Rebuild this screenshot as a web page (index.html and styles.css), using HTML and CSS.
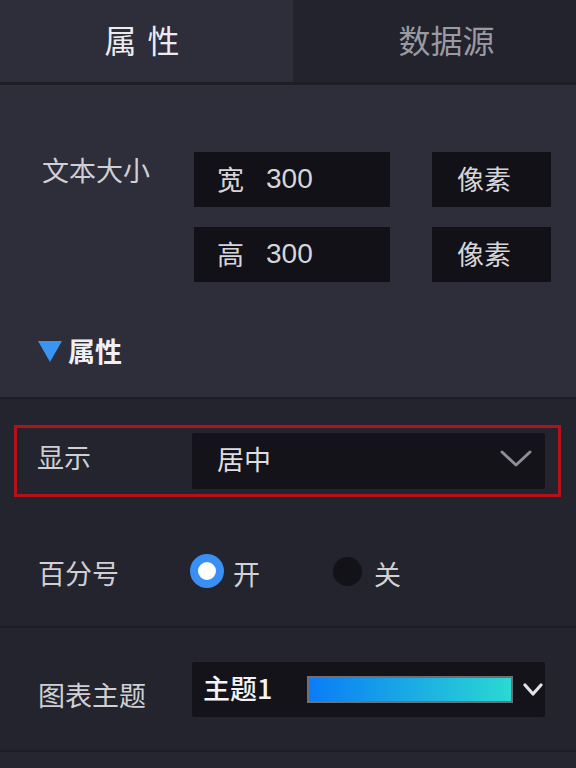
FILE: index.html
```html
<!DOCTYPE html>
<html lang="zh-CN">
<head>
<meta charset="utf-8">
<link rel="stylesheet" href="styles.css">
</head>
<body>
<div class="tabs">
  <div class="tab tab-active">属性</div>
  <div class="tab tab-inactive">数据源</div>
</div>

<section class="sec sec-top">
  <div class="size-row">
    <div class="label size-label">文本大小</div>
    <div class="size-grid">
      <div class="box box-input"><span class="dim">宽</span><span class="num">300</span></div>
      <div class="box box-unit">像素</div>
      <div class="box box-input"><span class="dim">高</span><span class="num">300</span></div>
      <div class="box box-unit">像素</div>
    </div>
  </div>
  <div class="sub-head">
    <svg class="tri" width="24" height="21" viewBox="0 0 24 21"><polygon points="0,0 24,0 12,21" fill="#3a95f2"/></svg>
    <span>属性</span>
  </div>
</section>

<section class="sec sec-mid">
  <div class="row row-highlight">
    <div class="label">显示</div>
    <div class="select">
      <span class="select-val">居中</span>
      <svg class="chev" width="32" height="18" viewBox="0 0 32 18"><polyline points="2,2 16,15 30,2" fill="none" stroke="#8e8e96" stroke-width="3" stroke-linecap="round" stroke-linejoin="round"/></svg>
    </div>
  </div>
  <div class="row row-radio">
    <div class="label">百分号</div>
    <div class="radios">
      <span class="radio radio-on"></span><span class="radio-text">开</span>
      <span class="radio radio-off"></span><span class="radio-text">关</span>
    </div>
  </div>
</section>

<section class="sec sec-theme">
  <div class="row row-theme">
    <div class="label">图表主题</div>
    <div class="select select-theme">
      <span class="theme-name">主题1</span>
      <span class="grad"></span>
      <svg class="chev-small" width="20" height="14" viewBox="0 0 20 14"><polyline points="2,2 10,11 18,2" fill="none" stroke="#e2e2e6" stroke-width="3.2" stroke-linecap="round" stroke-linejoin="round"/></svg>
    </div>
  </div>
</section>

<div class="bottom"></div>
</body>
</html>
```

FILE: styles.css
```css
* { box-sizing: border-box; }

html, body {
  margin: 0;
  padding: 0;
}

body {
  width: 576px;
  height: 768px;
  overflow: hidden;
  background: #262630;
  font-family: "Microsoft YaHei", "Noto Sans CJK SC", "Noto Sans", sans-serif;
  color: #cfcfd4;
}

/* Tabs */
.tabs {
  display: flex;
  height: 85px;
  border-bottom: 3px solid #1e1e27;
}

.tab {
  display: flex;
  align-items: center;
  justify-content: center;
  font-size: 32px;
  line-height: 1;
  padding-bottom: 4px;
}

.tab-active {
  width: 293px;
  background: #2e2e3a;
  color: #ececf0;
  letter-spacing: 11px;
  padding-left: 2px;
}

.tab-inactive {
  flex: 1;
  background: #23232d;
  color: #9a9aa2;
  padding-left: 24px;
}

/* Sections */
.sec {
  border-bottom: 2px solid #1c1c24;
}

.sec-top {
  background: #2e2e3a;
  height: 314px;
  padding-top: 67px;
}

.sec-mid {
  background: #24242e;
  height: 229px;
  padding-top: 26px;
}

.sec-theme {
  background: #24242e;
  height: 124px;
  padding-top: 34px;
}

.label {
  font-size: 27px;
  line-height: 40px;
  color: #cfcfd4;
  white-space: nowrap;
}

/* Size rows */
.size-row {
  display: flex;
  align-items: flex-start;
  padding-left: 42px;
}

.size-label {
  width: 152px;
  margin-top: -2px;
}

.size-grid {
  display: grid;
  grid-template-columns: 196px 119px;
  column-gap: 42px;
  row-gap: 20px;
}

.box {
  height: 55px;
  background: #111117;
  display: flex;
  align-items: center;
  font-size: 27px;
  line-height: 1;
  color: #d6d6da;
  padding-bottom: 2px;
}

.box-input {
  padding-left: 23px;
}

.box-unit {
  padding-left: 25px;
}

.num {
  margin-left: 22px;
  font-family: "Liberation Sans", "Noto Sans", sans-serif;
  font-size: 28px;
}

.sub-head {
  display: flex;
  align-items: center;
  gap: 6px;
  margin-top: 48px;
  padding-left: 38px;
  height: 40px;
  font-size: 27px;
  font-weight: bold;
  color: #f0f0f4;
}

.tri {
  display: block;
  margin-top: 2px;
}

/* Rows */
.row {
  display: flex;
  align-items: center;
}

.row .label {
  width: 154px;
  flex-shrink: 0;
}

.row-highlight {
  margin: 0 15px 0 14px;
  border: 3px solid #b3121b;
  padding: 5px 13px 5px 20px;
}

.row-highlight .label {
  width: 155px;
  margin-top: -8px;
}

.select {
  flex: 1;
  height: 56px;
  background: #131319;
  border-radius: 2px;
  display: flex;
  align-items: center;
  padding-left: 25px;
  padding-right: 13px;
  font-size: 27px;
  color: #dedee2;
}

.select-val {
  flex: 1;
  line-height: 1;
  margin-top: -6px;
}

.chev {
  display: block;
  margin-top: -4px;
}

.row-radio {
  padding-left: 38px;
  margin-top: 48px;
  height: 56px;
}

.radios {
  display: flex;
  align-items: center;
}

.radio {
  display: block;
  border-radius: 50%;
  margin-top: -4px;
}

.radio-on {
  width: 34px;
  height: 34px;
  margin-left: -2px;
  background: #ffffff;
  border: 8px solid #3a8ff4;
}

.radio-off {
  width: 29px;
  height: 29px;
  margin-left: 73px;
  background: #121218;
}

.radio-text {
  font-size: 27px;
  line-height: 1;
  margin-left: 9px;
  color: #d2d2d6;
}

.radio-off + .radio-text {
  margin-left: 12px;
}

/* Theme row */
.row-theme {
  padding-left: 38px;
  width: 545px;
}

.row-theme .label {
  margin-top: 10px;
}

.select-theme {
  height: 55px;
  padding-left: 11px;
  padding-right: 2px;
  width: 353px;
  flex: none;
}

.theme-name {
  font-size: 27px;
  font-weight: 500;
  color: #f4f4f8;
  width: 104px;
  line-height: 1;
  margin-top: -4px;
}

.grad {
  display: block;
  width: 206px;
  height: 27px;
  border: 2px solid #6f6f78;
  background: linear-gradient(to right, #0a7cf7, #2ad9d2);
}

.chev-small {
  display: block;
  margin-left: 10px;
}

.bottom {
  height: 16px;
  background: #262630;
}
```
